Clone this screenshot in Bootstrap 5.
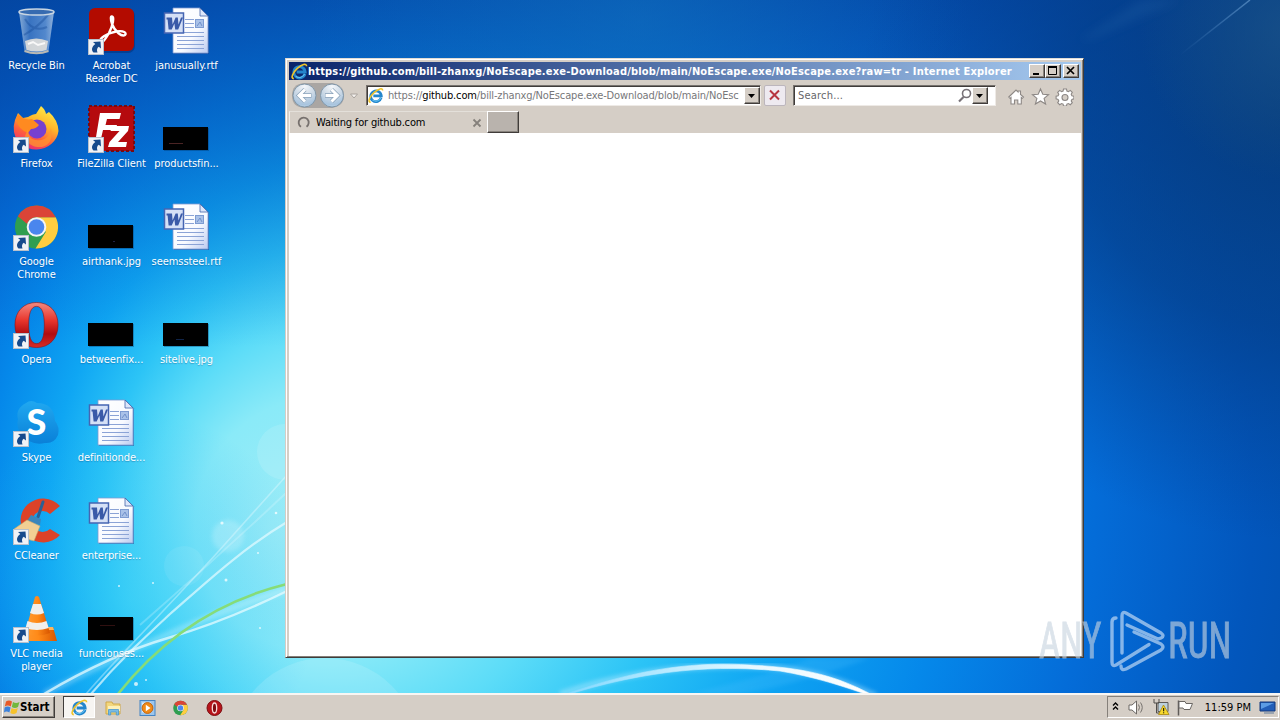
<!DOCTYPE html>
<html lang="en">
<head>
  <meta charset="UTF-8" />
  <meta name="viewport" content="width=device-width, initial-scale=1.0"/>
  <title>Desktop</title>
  <link href="https://cdn.jsdelivr.net/npm/bootstrap@5.3.0/dist/css/bootstrap.min.css" rel="stylesheet"/>
  <style>
    body {
      width: 1280px;
      height: 720px;
      font-family: "DejaVu Sans Condensed", "DejaVu Sans", sans-serif;
      font-stretch: condensed;
      font-size: 11px;
      line-height: 13px;
      color: #000;
      background: #0458b8;
    }
    svg { display: block; flex-shrink: 0; }
    .wallpaper { position: absolute; top: 0; left: 0; }

    /* desktop icons */
    .icon-grid {
      display: grid;
      grid-auto-flow: column;
      grid-template-rows: repeat(7, 98px);
      grid-auto-columns: 75px;
      justify-content: start;
      padding-top: 7px;
      margin-left: -1px;
    }
    .desk-icon { color: #fff; text-align: center; white-space: nowrap; text-shadow: 0 1px 1px rgba(0, 40, 90, .3); }
    .desk-icon svg { margin: 0 0 4px 13px; }
    .desk-icon span { display: block; letter-spacing: -.06px; }

    /* browser window */
    .ie-window {
      left: 285px;
      top: 58px;
      width: 799px;
      height: 600px;
      padding: 2px 2px 2px 3px;
      background: #d5cec6;
      border: 1px solid;
      border-color: #e0dcd6 #403c3a #403c3a #d5cec6;
      box-shadow: inset 1px 1px #fff, inset -1px -1px #85807a;
    }
    .title-bar {
      height: 18px;
      margin-top: 1px;
      padding: 0 2px;
      color: #fff;
      font-weight: bold;
      background: linear-gradient(90deg, #0a246a, #a6caf0);
    }
    .title-text { letter-spacing: .19px; }
    .raised {
      background: #d5cec6;
      border: 1px solid;
      border-color: #fff #403c3a #403c3a #fff;
      box-shadow: inset -1px -1px #88837d;
    }
    .caption-btn { width: 16px; height: 14px; }
    .close-btn { margin-left: 2px; }
    .tool-bar { height: 31px; padding-left: 2px; }
    .field-box {
      height: 21px;
      background: #fff;
      border: 1px solid;
      border-color: #77726e #eeeae6 #eeeae6 #77726e;
      box-shadow: inset 1px 1px #403c3a;
    }
    .address { width: 395px; margin-left: 6px; padding-left: 1px; }
    .address-text { margin-left: 4px; color: #77777a; white-space: nowrap; letter-spacing: -.15px; }
    .search { width: 203px; margin-left: 7px; padding: 0 3px 0 4px; color: #66666a; }
    .search-hint { letter-spacing: .2px; }
    .drop-btn { width: 16px; height: 17px; }
    .stop-btn { width: 22px; height: 21px; margin-left: 3px; background: #eeeaf0; border: 1px solid #bcb6bd; border-radius: 2px; }
    .tool-icons { margin-right: 7px; }
    .tab-strip { height: 22px; }
    .tab-item { width: 198px; padding: 0 5px 0 7px; border-left: 1px solid #f2efeb; border-top: 1px solid #e4e0da; }
    .tab-title { margin-left: 6px; letter-spacing: -.17px; }
    .new-tab { width: 32px; height: 22px; background: #b9b3ad; }
    .page-area { height: 523px; background: #fff; }

    /* taskbar */
    .task-bar { height: 28px; background: #d5cec6; border-top: 2px solid #f8f6f3; padding: 1px 1px 0 2px; }
    .start-btn { width: 53px; height: 22px; font-weight: bold; font-size: 11.500px; padding-left: 1px; }
    .task-active {
      width: 32px;
      height: 22px;
      margin-left: 8px;
      background: #f7f5f2;
      border: 1px solid;
      border-color: #403c3a #fff #fff #403c3a;
    }
    .quick-icons { margin-left: 10px; gap: 16.600px; }
    .tray {
      width: 172px;
      height: 22px;
      padding: 0 2px 0 4px;
      border: 1px solid;
      border-color: #85807a #fff #fff #85807a;
    }
    .watermark { left: 1030px; top: 600px; }
  </style>
</head>
<body class="m-0 overflow-hidden position-relative d-flex flex-column">

  <!-- shared icon shapes -->
  <svg width="0" height="0" class="position-absolute">
    <defs>
      <linearGradient id="paper" x1="0" y1="0" x2="1" y2="1"><stop offset="0" stop-color="#fff"/><stop offset=".6" stop-color="#f8faff"/><stop offset="1" stop-color="#bccbf0"/></linearGradient>
      <linearGradient id="fox" x1=".8" y1="0" x2=".3" y2="1"><stop offset="0" stop-color="#fff04a"/><stop offset=".4" stop-color="#ffb52a"/><stop offset=".7" stop-color="#ff603c"/><stop offset="1" stop-color="#e82878"/></linearGradient>
      <linearGradient id="opera" x1="0" y1="0" x2="0" y2="1"><stop offset="0" stop-color="#f48a80"/><stop offset=".4" stop-color="#e8352c"/><stop offset=".7" stop-color="#b00c10"/><stop offset="1" stop-color="#d82c28"/></linearGradient>
      <linearGradient id="cone" x1="0" y1="0" x2="1" y2="0"><stop offset="0" stop-color="#ff9c32"/><stop offset=".5" stop-color="#ff8a18"/><stop offset="1" stop-color="#d85600"/></linearGradient>
      <linearGradient id="glass" x1="0" y1="0" x2="1" y2="0"><stop offset="0" stop-color="#a8c4e2" stop-opacity=".8"/><stop offset=".3" stop-color="#4a80c8" stop-opacity=".75"/><stop offset=".75" stop-color="#6c9cd8" stop-opacity=".75"/><stop offset="1" stop-color="#b4cce8" stop-opacity=".8"/></linearGradient>
      <linearGradient id="sky" x1="0" y1="0" x2="0" y2="1"><stop offset="0" stop-color="#20a8f0"/><stop offset="1" stop-color="#0a80d8"/></linearGradient>
      <radialGradient id="navball" cx=".5" cy=".1" r="1"><stop offset="0" stop-color="#f4f7fa"/><stop offset=".45" stop-color="#ccd9e6"/><stop offset=".8" stop-color="#a8c4de"/><stop offset="1" stop-color="#d4e8f6"/></radialGradient>
      <symbol id="arrow-badge" viewBox="0 0 16 16">
        <rect x=".5" y=".5" width="15" height="15" fill="#f0f2f6" stroke="#b8c0cc"/>
        <path d="M5 3l7.500-.5.500 7-2.300-1.800C9 9 8.500 11 9.500 13.500H5.500C3 11 3.800 7.500 7.300 5z" fill="#174a8c"/>
      </symbol>
      <symbol id="word-doc" viewBox="0 0 48 48">
        <path d="M12 1.500h27l8 8V47H12z" fill="#274b96" opacity=".55"/>
        <path d="M11 1h27l8 8v37H11z" fill="url(#paper)" stroke="#7e9ad2" stroke-width=".8"/>
        <path d="M38 1v8h8z" fill="#dce6fa" stroke="#4464a8" stroke-width=".8"/>
        <path d="M23 12.500h9M23 16.500h9M23 20.500h9M15 25.500h27M15 29.500h27M15 33.500h27M15 37.500h27M15 41.500h27" stroke="#8ba3d6"/>
        <rect x="33.500" y="12.500" width="8" height="8" fill="#a9c1e8" stroke="#7d9bd2"/>
        <path d="M35 19l3-4 2 4" stroke="#7090ca" fill="none"/>
        <rect x="2.500" y="6" width="19" height="20" fill="#d5e0f6" stroke="#4565b2" stroke-width="1.500"/>
        <path d="M4.500 10.500H10l.6 7 3-7h2.200l.7 7 2.500-7h2l-4.800 12h-3l-.8-6-2.700 6H6.600L5.600 12.500h-1.100z" fill="#3a5aa8"/>
      </symbol>
      <symbol id="chrome" viewBox="0 0 48 48">
        <circle cx="24" cy="24" r="22" fill="#2f9e50"/>
        <path d="M24 14h19.600A22 22 0 0 1 23 46l10.500-17z" fill="#ffcd40"/>
        <path d="M5 13A22 22 0 0 1 43.600 14H24a10 10 0 0 0-9.500 7z" fill="#db4437"/>
        <circle cx="24" cy="24" r="10" fill="#f4f4f4"/><circle cx="24" cy="24" r="8" fill="#4a86ee"/>
      </symbol>
      <symbol id="ie" viewBox="0 0 18 18">
        <path d="M14.800 11.500A6 6 0 1 1 15 9.500H6" fill="none" stroke="#2486cc" stroke-width="3"/>
        <path d="M14.400 11.500A6 6 0 0 1 5 14" fill="none" stroke="#62c1f2" stroke-width="1.200"/>
        <path d="M3 16.500C-1 16.500 2 10 7 5.500 11.500 1.500 16.500-.2 16.500 3.500" fill="none" stroke="#f0c42a" stroke-width="1.700"/>
      </symbol>
      <symbol id="opera-o" viewBox="0 0 48 48">
        <path fill-rule="evenodd" d="M24 1C37 1 46 10 46 24S37 47 24 47 2 38 2 24 11 1 24 1zm0 4c-6 0-8 8-8 19s2 19 8 19 8-8 8-19-2-19-8-19z" fill="url(#opera)" stroke="#8c1014" stroke-width=".6"/>
      </symbol>
      <symbol id="photo" viewBox="0 0 48 48">
        <rect x="2" y="23" width="45" height="23" fill="#003060" opacity=".35"/>
        <rect x="1" y="22" width="45" height="23" fill="#000"/>
      </symbol>
    </defs>
  </svg>

  <svg class="wallpaper" width="1280" height="694" viewBox="0 0 1280 694">
    <defs>
      <radialGradient id="glow" gradientUnits="userSpaceOnUse" cx="600" cy="500" r="800" fx="270" fy="530">
        <stop offset="0" stop-color="#9decf7"/><stop offset=".16" stop-color="#8aeaf8"/><stop offset=".26" stop-color="#5cdcf8"/>
        <stop offset=".36" stop-color="#2cc4f6"/><stop offset=".47" stop-color="#0fa6f3"/><stop offset=".6" stop-color="#0588ea"/>
        <stop offset=".73" stop-color="#046cd8"/><stop offset=".87" stop-color="#0256bc"/><stop offset="1" stop-color="#024ca4"/>
      </radialGradient>
      <linearGradient id="topshade" x1="0" y1="0" x2="0" y2="1"><stop offset="0" stop-color="#0444a0" stop-opacity=".75"/><stop offset=".2" stop-color="#0450b4" stop-opacity=".5"/><stop offset=".5" stop-color="#0468cc" stop-opacity="0"/></linearGradient>
      <radialGradient id="corner" gradientUnits="userSpaceOnUse" cx="1290" cy="110" r="430"><stop offset="0" stop-color="#063a78" stop-opacity=".85"/><stop offset=".5" stop-color="#043c84" stop-opacity=".62"/><stop offset="1" stop-color="#044090" stop-opacity="0"/></radialGradient>
      <radialGradient id="haze" gradientUnits="userSpaceOnUse" cx="1290" cy="30" r="150"><stop offset="0" stop-color="#1c5488" stop-opacity=".7"/><stop offset="1" stop-color="#1c5488" stop-opacity="0"/></radialGradient>
      <radialGradient id="topglow" gradientUnits="userSpaceOnUse" cx="640" cy="20" r="330"><stop offset="0" stop-color="#1274c0" stop-opacity=".5"/><stop offset="1" stop-color="#1270c0" stop-opacity="0"/></radialGradient>
      <radialGradient id="lowglow" gradientUnits="userSpaceOnUse" cx="130" cy="600" r="190"><stop offset="0" stop-color="#38d0f6" stop-opacity=".5"/><stop offset="1" stop-color="#10b0f6" stop-opacity="0"/></radialGradient>
      <linearGradient id="streak" x1="0" y1="1" x2="1" y2="0"><stop offset="0" stop-color="#3d75b4" stop-opacity="0"/><stop offset="1" stop-color="#4a80b8"/></linearGradient>
      <linearGradient id="arc" x1="0" y1="0" x2="1" y2="0"><stop offset="0" stop-color="#7ed8ff"/><stop offset=".6" stop-color="#e8f8ff"/><stop offset="1" stop-color="#fff"/></linearGradient>
      <filter id="soft"><feGaussianBlur stdDeviation="2"/></filter>
      <filter id="softer"><feGaussianBlur stdDeviation="5"/></filter>
    </defs>
    <rect width="1280" height="694" fill="url(#glow)"/>
    <rect width="1280" height="694" fill="url(#topshade)"/>
    <rect width="1280" height="694" fill="url(#topglow)"/>
    <rect width="1280" height="694" fill="url(#corner)"/>
    <rect width="1280" height="694" fill="url(#haze)"/>
    <rect width="1280" height="694" fill="url(#lowglow)"/>
    <path d="M1180 55 1250 0" stroke="url(#streak)" stroke-width="1.500"/>
    <path d="M1080 40 1140 0h40L1090 40z" fill="#2a6aac" opacity=".22" filter="url(#softer)"/>
    <circle cx="285" cy="452" r="28" fill="#fff" opacity=".12"/>
    <circle cx="228" cy="536" r="16" fill="#fff" opacity=".2" filter="url(#soft)"/>
    <circle cx="184" cy="566" r="20" fill="#fff" opacity=".07"/>
    <circle cx="325" cy="752" r="94" fill="#fff" opacity=".13"/>
    <g fill="none" stroke="#e6fbff">
      <path d="M86 694C115 660 140 637 217 553L287 475" opacity=".4" stroke-width="1.600"/>
      <path d="M140 625Q215 560 287 492" opacity=".25" stroke-width="2"/>
      <path d="M91 694C120 660 142 640 170 614 200 588 240 550 287 522" opacity=".7" stroke-width="2.200"/>
      <path d="M44 694Q130 650 190 625T287 590" opacity=".3" stroke-width="6" filter="url(#soft)"/>
      <path d="M44 694Q110 655 168 638T287 591" opacity=".75" stroke-width="2.500"/>
    </g>
    <path d="M118 694Q185 609 287 584" fill="none" stroke="#86dc78" stroke-width="2.600"/>
    <g fill="#fff" opacity=".75"><circle cx="222" cy="523" r="1.600"/><circle cx="276" cy="513" r="1.300"/><circle cx="226" cy="580" r="1.500"/><circle cx="258" cy="553" r="1"/><circle cx="153" cy="583" r="1"/><circle cx="136" cy="684" r="2"/><circle cx="146" cy="680" r="1"/><circle cx="119" cy="586" r="1"/><circle cx="260" cy="628" r="1"/></g>
    <path d="M690 694Q780 672 810 658h60Q800 684 740 694z" fill="#5cc4ff" opacity=".2" filter="url(#soft)"/>
    <path d="M560 694C650 664 730 664 780 668 825 674 850 684 876 696" fill="none" stroke="#bdeaff" stroke-width="6" filter="url(#soft)" opacity=".45"/>
    <path d="M560 694C645 664 700 660 750 663 810 666 840 675 880 697 840 683 815 675 780 669 720 663 650 666 560 695z" transform="translate(0 2)" fill="url(#arc)" stroke="url(#arc)" stroke-width=".6"/>
  </svg>

  <main class="icon-grid position-relative flex-grow-1">
    <div class="desk-icon">
      <svg width="48" height="48" viewBox="0 0 48 48">
        <path d="M7 5 12.500 44q12 4.500 24 0L42 5z" fill="url(#glass)"/>
        <path d="M13 34q11-5 23 0l-1.500 9q-10 3-20 0z" fill="#e2e0da" opacity=".9"/>
        <path d="M16 37l5-2 5 3 7-2" stroke="#f8f8f8" stroke-width="2" fill="none"/>
        <path d="M13 12q8 14 22 8M12 28q14-8 24-20" stroke="#174c98" stroke-width="2" fill="none" opacity=".4"/>
        <ellipse cx="24.500" cy="5" rx="17.500" ry="3" fill="#376bb0" stroke="#c8d5e2" stroke-width="1.500"/>
        <path d="M12.500 44q12 4.500 24 0" stroke="#b9b9b4" stroke-width="2" fill="none"/>
      </svg>
      <span>Recycle Bin</span>
    </div>
    <div class="desk-icon">
      <svg width="48" height="48" viewBox="0 0 48 48">
        <rect x="3" y="2" width="45" height="44" rx="7" fill="#062c70" opacity=".5"/>
        <rect x="2" y="1" width="45" height="43" rx="6" fill="#b30b00"/>
        <path d="M13.500 34.500C12 32 19 26.500 29 24.500 37 23 40 26 38 28 35 30 28 25 25 17 23.500 12 23.500 9 25 9.500 27.500 10 26 18 22 26 18 33 15 36.500 13.500 34.500z" fill="none" stroke="#fff" stroke-width="2.400"/>
        <use href="#arrow-badge" x="1" y="32" width="16" height="16"/>
      </svg>
      <span>Acrobat<br>Reader DC</span>
    </div>
    <div class="desk-icon"><svg width="48" height="48"><use href="#word-doc"/></svg><span>janusually.rtf</span></div>
    <div class="desk-icon"><svg width="48" height="48"><use href="#photo"/><path d="M7 38.500h14" stroke="#4a2424"/></svg><span>productsfin...</span></div>
    <div class="desk-icon"><svg width="48" height="48"><use href="#word-doc"/></svg><span>seemssteel.rtf</span></div>
    <div class="desk-icon"><svg width="48" height="48"><use href="#photo"/><path d="M14 38.500h8" stroke="#102448"/></svg><span>sitelive.jpg</span></div>
  </main>

  <div class="ie-window position-absolute">
    <div class="title-bar d-flex align-items-center">
      <svg width="17" height="17"><use href="#ie"/></svg>
      <span class="title-text text-nowrap">https://github.com/bill-zhanxg/NoEscape.exe-Download/blob/main/NoEscape.exe/NoEscape.exe?raw=tr - Internet Explorer</span>
      <div class="d-flex ms-auto">
        <div class="raised caption-btn"><svg width="14" height="12"><path d="M3 9h6" stroke="#000" stroke-width="2"/></svg></div>
        <div class="raised caption-btn"><svg width="14" height="12"><path d="M2.500 2v7.500h8V2M2 2h9" fill="none" stroke="#000"/><path d="M2 2h9" stroke="#000" stroke-width="2"/></svg></div>
        <div class="raised caption-btn close-btn"><svg width="14" height="12"><path d="M3 2l7 7M10 2 3 9" stroke="#000" stroke-width="1.700"/></svg></div>
      </div>
    </div>
    <div class="tool-bar d-flex align-items-center">
      <svg width="69" height="29" viewBox="0 0 69 29">
        <path d="M13 2h28q12 2 12 12.500T41 27H13Q1 26 1 14.500T13 2z" fill="#aaa6a3"/>
        <circle cx="13.500" cy="14.500" r="11.500" fill="url(#navball)" stroke="#8096a8"/>
        <circle cx="41" cy="14.500" r="11.500" fill="url(#navball)" stroke="#8096a8"/>
        <g fill="none" stroke="#8ba3ba" stroke-width="4.400"><path d="M20.500 14.500H8.500M14 8.500l-6 6 6 6"/><path d="M34 14.500h12M40.500 8.500l6 6-6 6"/></g>
        <g fill="none" stroke="#fff" stroke-width="3"><path d="M20 14.500H8.500M14 8.500l-6 6 6 6"/><path d="M34.500 14.500h12M40.500 8.500l6 6-6 6"/></g>
        <path d="M59.500 13h7l-3.500 4z" fill="#f4f1ee" stroke="#aaa49e"/>
      </svg>
      <div class="field-box address d-flex align-items-center">
        <svg width="16" height="17" viewBox="0 0 18 18"><use href="#ie"/></svg>
        <div class="address-text">https://<span class="text-black">github.com</span>/bill-zhanxg/NoEscape.exe-Download/blob/main/NoEsc</div>
        <div class="raised drop-btn ms-auto"><svg width="14" height="15"><path d="M3 6h7l-3.500 4z"/></svg></div>
      </div>
      <div class="stop-btn"><svg width="20" height="19"><path d="M5 4.500l9 9M14 4.500l-9 9" stroke="#b73540" stroke-width="2"/></svg></div>
      <div class="field-box search d-flex align-items-center">
        <span class="search-hint">Search...</span>
        <svg class="ms-auto" width="14" height="15" viewBox="0 0 14 15"><circle cx="8.500" cy="5.500" r="4" fill="none" stroke="#777177" stroke-width="1.600"/><path d="M5.500 9 1 13.500" stroke="#777177" stroke-width="2.200"/></svg>
        <div class="raised drop-btn me-1"><svg width="14" height="15"><path d="M3 6h7l-3.500 4z"/></svg></div>
      </div>
      <svg class="tool-icons ms-auto" width="66" height="20" viewBox="0 0 66 20">
        <g fill="#fff" stroke="#8d8885" stroke-width="1.100">
          <path d="M.8 11 8 4l2 2V5h2.500v3.500L15.500 11l-1.200 1.300-1-.9V18H9.800v-4H6.500v4H3v-6.600l-1 .9z"/>
          <path d="M32.500 3l2.300 5.300 5.700.4-4.400 3.700 1.500 5.600-5.100-3-5.100 3 1.500-5.600-4.400-3.700 5.700-.4z"/>
          <path d="M55.500 3h3l.4 2 1.600.6 1.800-1.200 2 2-1.100 1.800.7 1.500 2 .5v2.700l-2 .5-.7 1.500 1.100 1.800-2 2-1.800-1.200-1.600.6-.4 1.900h-3l-.4-1.900-1.600-.6-1.800 1.200-2-2 1.100-1.800-.7-1.500-2-.5v-2.700l2-.5.7-1.500-1.100-1.800 2-2 1.800 1.200 1.600-.6z"/>
          <circle cx="57" cy="11.500" r="3" fill="#d5cec6"/>
        </g>
      </svg>
    </div>
    <div class="tab-strip d-flex">
      <div class="tab-item d-flex align-items-center">
        <svg width="13" height="13" viewBox="0 0 13 13"><path d="M4 10.800A5 5 0 1 1 9.500 10.700" fill="none" stroke="#77716e" stroke-width="1.800"/></svg>
        <span class="tab-title">Waiting for github.com</span>
        <svg class="ms-auto" width="10" height="10"><path d="M1.500 1.500l7 7M8.500 1.500l-7 7" stroke="#85807b" stroke-width="1.800"/></svg>
      </div>
      <div class="raised new-tab"></div>
    </div>
    <div class="page-area"></div>
  </div>

  <footer class="task-bar position-relative d-flex align-items-start">
    <div class="raised start-btn d-flex align-items-center">
      <svg width="16" height="18" viewBox="0 0 16 18">
        <path d="M2 3.500q3-2 6 0L6.800 8.500q-3-2-6 0z" fill="#e85a28"/><path d="M9 4q3 2 6.500 0L14 9q-3 2-6.200 0z" fill="#72b83c"/>
        <path d="M.6 9.500q3-2 6 0l-1.200 5q-3-2-5.400 0z" fill="#3c82dc"/><path d="M7.600 10q3 2 6.200 0l-1.300 5q-3 2-6.200 0z" fill="#f6c22c"/>
      </svg>
      <span>Start</span>
    </div>
    <div class="task-active d-flex align-items-center justify-content-center"><svg width="17" height="17" viewBox="0 0 18 18"><use href="#ie"/></svg></div>
    <div class="quick-icons d-flex pt-1">
      <svg width="17" height="16" viewBox="0 0 17 16"><path d="M1 2h6l1 2h7v10H1z" fill="#f2d67c" stroke="#d0a848"/><path d="M3 6h12v5H3z" fill="#fdf0b8"/><path d="M3.500 15V9.500h10V15h-2.200v-3H5.700v3z" fill="#79bce4" stroke="#4b98cc" stroke-width=".8"/></svg>
      <svg width="17" height="16" viewBox="0 0 17 16"><rect x="1" y=".5" width="15" height="15" fill="#9dc6ec" stroke="#4484c4"/><rect x="3" y="2.500" width="9" height="10" fill="#d8ecfc"/><circle cx="8.500" cy="8" r="5.400" fill="#f08a18" stroke="#c86408"/><path d="M6.800 4.800v6.400L11.500 8z" fill="#fff"/></svg>
      <svg width="17" height="16" viewBox="0 0 48 48"><use href="#chrome" width="48" height="48"/></svg>
      <svg width="17" height="16" viewBox="0 0 17 16"><circle cx="8.500" cy="8" r="7.500" fill="#b8141a" stroke="#7c0c10"/><ellipse cx="8.500" cy="8" rx="2.200" ry="5" fill="#7c0c10" stroke="#f8dcdc" stroke-width="1.300"/></svg>
    </div>
    <div class="tray d-flex align-items-center ms-auto">
      <svg width="84" height="20" viewBox="0 0 84 20">
        <path d="M1 8.500 3.500 6 6 8.500M1 12.500 3.500 10 6 12.500" fill="none" stroke="#000" stroke-width="1.400"/>
        <path d="M17 8h3l4.500-4v13L20 13h-3z" fill="#fff" stroke="#6c6864"/>
        <path d="M26.500 7.500q2 3 0 6M28.500 5.500q3.500 5 0 10" fill="none" stroke="#77736f"/>
        <path d="M46 5.500h10v9H46z" fill="#bcd0dc" stroke="#5d5b58"/><path d="M42 2v4h5V2M44.500 6v10h4" fill="none" stroke="#4f4d4a"/><path d="M51.500 8 57 17.500H46.500z" fill="#f7d82c" stroke="#a8860c" stroke-width=".8"/><path d="M51.700 11v3.300M51.700 15.300v1" stroke="#000"/>
        <path d="M66.500 3.500v15" stroke="#5f5b58" stroke-width="1.500"/><path d="M67 4.500h6l1 2h6.500l-2.500 6h-6l-1-1.500h-4z" fill="#fff" stroke="#6b6764"/>
      </svg>
      <span class="ms-auto me-2 text-nowrap">11:59 PM</span>
      <svg width="17" height="16" viewBox="0 0 17 16"><path d="M1 3h15v9H1z" fill="#225eb8" stroke="#12397c"/><path d="M2 4h13L2 10z" fill="#5c9ce4"/><path d="M5 13h10v2H5z" fill="#9aa4b0"/></svg>
    </div>
  </footer>

  <svg class="watermark position-absolute" width="240" height="90" viewBox="0 0 240 90">
    <g fill="#c8d4e0" stroke="#c8d4e0" stroke-width=".9" opacity=".62" font-family="Roboto, sans-serif" font-size="50">
      <text transform="translate(9 58) scale(.73 1)">ANY</text>
      <text transform="translate(138 58) scale(.74 1)">RUN</text>
    </g>
    <g fill="none" stroke="#b8d4f2" stroke-opacity=".72" stroke-width="3.400" stroke-linejoin="round" stroke-linecap="round">
      <path d="M86 18q-4 0-4 4v40q0 5 4 3L119 44.500"/>
      <path d="M92 53V16q0-5 4-3l35 20q4 3 0 5l-3 1L97 25"/>
      <path d="M91 66q0 5 5 3L131 50q4-3 0-6L104 32"/>
    </g>
  </svg>

  <script src="https://cdn.jsdelivr.net/npm/bootstrap@5.3.0/dist/js/bootstrap.bundle.min.js"></script>
  <script>
    const ARROW = '<use href="#arrow-badge" x="1" y="32" width="16" height="16"/>';
    const WORD = '<use href="#word-doc"/>';
    const PHOTO = '<use href="#photo"/>';

    const firstColumn = [
      ['Firefox', `<path d="M3 15 6 8l5 5 5-1Q21 9 24 9L29 1q4 3 5 8l3-2q9 8 9.500 19A22.500 21 0 0 1 2 27q-1-6 1-12z" fill="url(#fox)"/>
        <circle cx="25" cy="24" r="9.500" fill="#7640d0"/><path d="M6 9q6 7 14 5l7 6q-3 4-8 4l-3 4Q6 24 4 14z" fill="#ff8a20"/><path d="M16 24q0 13 13 11 8-1 10-12 3 16-9 19-14 1-17-11z" fill="#ff9a2c" opacity=".7"/>${ARROW}`],
      ['Google<br>Chrome', `<use href="#chrome" x="1" width="47" height="48"/>${ARROW}`],
      ['Opera', `<use href="#opera-o" x="1" width="47" height="48"/>${ARROW}`],
      ['Skype', `<path d="M14 4q5-4 11 0 17 0 18 18 5 6 3 14-4 9-13 8-14 3-24-8-5-9-3-16-3-10 8-16z" fill="url(#sky)"/>
        <text x="24.500" y="36" text-anchor="middle" font-family="Lato, sans-serif" font-size="36" font-weight="900" fill="#fff" style="text-shadow:none">S</text>${ARROW}`],
      ['CCleaner', `<path d="M48 9A22.500 22 0 1 0 48 38L38 32A10.500 10.500 0 1 1 38 17z" fill="#dc4228"/>
        <path d="M31 5 26 20" stroke="#2c6094" stroke-width="3" stroke-linecap="round"/><path d="M19 18l10 4-1 6-13-4z" fill="#3b86bc"/><path d="M15 23 2 32q10 10 20 12l6-15z" fill="#f2cf94" stroke="#c9a46a" stroke-width=".6"/>${ARROW}`],
      ['VLC media<br>player', `<path d="M10 32h31l4 14H8z" fill="url(#cone)"/><path d="M10 32h31l1 3H9z" fill="#ffb55c"/>
        <path d="M23 2q2-2 4 0l11 36q-13 5-25 0z" fill="url(#cone)"/><path d="M21 9h8l3 9q-7 3-14 0zM15.500 26q9.500 4 19 0l2.200 7q-12 4-23.200 0z" fill="#f1efec"/>${ARROW}`]
    ];
    const secondColumn = [
      ['FileZilla Client', `<rect x="2" y="1" width="45" height="45" fill="#b50a0e" stroke="#7a0a10" stroke-width="2" stroke-dasharray="3 2"/>
        <path d="M13 8h21l-1.500 6H20l-1.500 6H30l-1.500 5H16L13 38H8z" fill="#fff"/><path d="M25 21h17l-1 5-10 11h9l-1 5H21l1.500-5 10-11h-9z" fill="#fff"/>${ARROW}`],
      ['airthank.jpg', `${PHOTO}<path d="M26 38.500h2" stroke="#224"/>`],
      ['betweenfix...', PHOTO],
      ['definitionde...', WORD],
      ['enterprise...', WORD],
      ['functionses...', `${PHOTO}<path d="M13 30.500h15" stroke="#301010"/>`]
    ];

    // the bin and Acrobat already head the first two columns
    const grid = document.querySelector('.icon-grid');
    const heads = grid.querySelectorAll('.desk-icon');
    const markup = items => items.map(([label, art]) =>
      `<div class="desk-icon"><svg width="48" height="48">${art}</svg><span>${label}</span></div>`).join('');
    heads[0].insertAdjacentHTML('afterend', markup(firstColumn));
    heads[1].insertAdjacentHTML('afterend', markup(secondColumn));
  </script>
</body>
</html>
